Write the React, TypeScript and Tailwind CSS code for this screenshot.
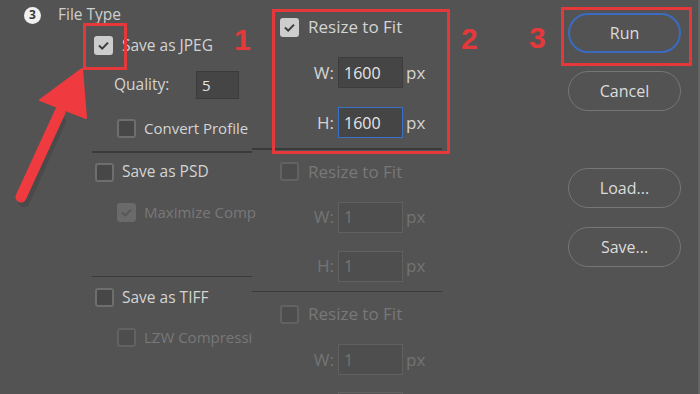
import type { ReactNode } from "react"

function Check({ checked = false, disabled = false }: { checked?: boolean; disabled?: boolean }) {
  const box = checked
    ? disabled
      ? "bg-[#6a6a6a] border-[#6a6a6a]"
      : "bg-[#cdcdcd] border-[#cdcdcd]"
    : disabled
      ? "bg-[#4d4d4d] border-[#626262]"
      : "bg-[#474747] border-[#6e6e6e]"
  return (
    <span className={`w-[19px] h-[19px] rounded-[3px] border-2 flex items-center justify-center shrink-0 ${box}`}>
      {checked && (
        <svg width="13" height="13" viewBox="0 0 13 13">
          <polyline
            points="2,6.5 5.2,9.6 11,3.6"
            fill="none"
            stroke={disabled ? "#575757" : "#3b3b3b"}
            strokeWidth="2"
          />
        </svg>
      )}
    </span>
  )
}

function Row({ children, className = "" }: { children: ReactNode; className?: string }) {
  return <div className={`flex items-center whitespace-nowrap ${className}`}>{children}</div>
}

function Field({ label, value, disabled = false, focused = false }: { label: string; value: string; disabled?: boolean; focused?: boolean }) {
  const text = disabled ? "text-[#747474]" : "text-[#d4d4d4]"
  const box = focused
    ? "border-[#3a70c8] bg-[#454545] text-[#e6e6e6]"
    : disabled
      ? "border-[#606060] bg-[#4e4e4e] text-[#747474]"
      : "border-[#3d3d3d] bg-[#454545] text-[#e6e6e6]"
  return (
    <div className="flex items-center h-[31px]">
      <span className={`w-[86px] text-right pr-[4px] text-[17px] ${text}`}>{label}</span>
      <span className={`w-[65px] h-[31px] border-[1.5px] flex items-center pl-[5px] text-[16px] ${box}`}>{value}</span>
      <span className={`ml-[3px] text-[17px] ${text}`}>px</span>
    </div>
  )
}

function Pill({ label, primary = false }: { label: string; primary?: boolean }) {
  return (
    <button
      className={`w-[113px] h-[40px] rounded-full flex items-center justify-center text-[16px] text-[#dcdcdc] ${
        primary ? "border-2 border-[#3b6bc0]" : "border-[1.5px] border-[#767676]"
      }`}
    >
      {label}
    </button>
  )
}

export default function App() {
  return (
    <div
      className="relative w-[700px] h-[394px] overflow-hidden bg-[#535353] text-[#d4d4d4] flex"
      style={{ fontFamily: '"Open Sans", "Noto Sans", sans-serif' }}
    >
      {/* left column */}
      <div className="w-[252px] shrink-0 flex flex-col pt-[6px]">
        <Row className="h-[18px] pl-[24px]">
          <span className="w-[17px] h-[17px] rounded-full bg-[#f0f0f0] text-[#3a3a3a] text-[12px] font-bold flex items-center justify-center leading-none">
            3
          </span>
          <span className="ml-[17px] text-[15.5px] text-[#cfcfcf]">File Type</span>
        </Row>
        <Row className="h-[19px] mt-[12px] pl-[94px]">
          <Check checked />
          <span className="ml-[9px] text-[15.5px]">Save as JPEG</span>
        </Row>
        <Row className="h-[28px] mt-[16px] pl-[114px]">
          <span className="w-[82px] text-[15.5px]">Quality:</span>
          <span className="w-[43px] h-[28px] border-[1.5px] border-[#3b3b3b] bg-[#454545] flex items-center pl-[5px] text-[15px] text-[#e6e6e6]">
            5
          </span>
        </Row>
        <Row className="h-[19px] mt-[20px] pl-[117px]">
          <Check />
          <span className="ml-[8px] text-[15px]">Convert Profile</span>
        </Row>
        <div className="ml-[92px] mt-[13px] h-[1.5px] bg-[#3a3a3a]" />
        <Row className="h-[19px] mt-[10px] pl-[95px]">
          <Check />
          <span className="ml-[8px] text-[15.5px]">Save as PSD</span>
        </Row>
        <Row className="h-[19px] mt-[21px] pl-[117px]">
          <Check checked disabled />
          <span className="ml-[8px] text-[15px] text-[#787878]">Maximize Comp</span>
        </Row>
        <div className="ml-[92px] mt-[54px] h-[1.5px] bg-[#3a3a3a]" />
        <Row className="h-[19px] mt-[11px] pl-[95px]">
          <Check />
          <span className="ml-[8px] text-[15.5px]">Save as TIFF</span>
        </Row>
        <Row className="h-[19px] mt-[21px] pl-[117px]">
          <Check disabled />
          <span className="ml-[8px] text-[15px] text-[#787878]">LZW Compressi</span>
        </Row>
      </div>

      {/* middle column */}
      <div className="w-[190px] shrink-0 flex flex-col pt-[17px]">
        <Row className="h-[20px] pl-[28px]">
          <Check checked />
          <span className="ml-[9px] text-[17px]">Resize to Fit</span>
        </Row>
        <div className="mt-[20px]">
          <Field label="W:" value="1600" />
        </div>
        <div className="mt-[19px]">
          <Field label="H:" value="1600" focused />
        </div>
        <div className="mt-[10px] h-[1.5px] bg-[#3a3a3a]" />
        <Row className="h-[20px] mt-[12px] pl-[28px]">
          <Check disabled />
          <span className="ml-[9px] text-[17px] text-[#787878]">Resize to Fit</span>
        </Row>
        <div className="mt-[20px]">
          <Field label="W:" value="1" disabled />
        </div>
        <div className="mt-[18px]">
          <Field label="H:" value="1" disabled />
        </div>
        <div className="mt-[9px] h-[1.5px] bg-[#3a3a3a]" />
        <Row className="h-[20px] mt-[12px] pl-[28px]">
          <Check disabled />
          <span className="ml-[9px] text-[17px] text-[#787878]">Resize to Fit</span>
        </Row>
        <div className="mt-[20px]">
          <Field label="W:" value="1" disabled />
        </div>
        <div className="mt-[17px] h-[2px] ml-[86px] w-[65px] border-t-[1.5px] border-x-[1.5px] border-[#606060]" />
      </div>

      {/* right column */}
      <div className="flex-1 flex flex-col items-start pl-[126px] pt-[13px]">
        <Pill label="Run" primary />
        <div className="mt-[18px]">
          <Pill label="Cancel" />
        </div>
        <div className="mt-[57px]">
          <Pill label="Load..." />
        </div>
        <div className="mt-[19px]">
          <Pill label="Save..." />
        </div>
      </div>
      <div className="w-[2px] shrink-0 bg-[#646464]" />

      {/* annotations */}
      <div className="absolute left-[83px] top-[23px] w-[44px] h-[47px] border-[3px] border-[#e5383b]" />
      <div className="absolute left-[272px] top-[9px] w-[178px] h-[145px] border-[3px] border-[#e5383b]" />
      <div className="absolute left-[561px] top-[7px] w-[131px] h-[59px] border-[3px] border-[#e5383b]" />
      <span
        className="absolute left-[234px] top-[22px] text-[30px] leading-[36px] font-bold text-[#e5383b]"
        style={{ fontFamily: '"Liberation Sans", Arial, sans-serif' }}
      >
        1
      </span>
      <span
        className="absolute left-[461px] top-[21px] text-[30px] leading-[36px] font-bold text-[#e5383b]"
        style={{ fontFamily: '"Liberation Sans", Arial, sans-serif' }}
      >
        2
      </span>
      <span
        className="absolute left-[529px] top-[20px] text-[30px] leading-[36px] font-bold text-[#e5383b]"
        style={{ fontFamily: '"Liberation Sans", Arial, sans-serif' }}
      >
        3
      </span>
      <svg className="absolute left-0 top-0" width="700" height="394" viewBox="0 0 700 394">
        <line x1="22" y1="198" x2="58" y2="118" stroke="#3a3a3a" strokeOpacity="0.35" strokeWidth="12" strokeLinecap="round" transform="translate(2,3)" />
        <line x1="21" y1="197" x2="60" y2="112" stroke="#ef3b3f" strokeWidth="11" strokeLinecap="round" />
        <polygon points="82,69 86,118 40,100" fill="#ef3b3f" strokeLinejoin="round" stroke="#ef3b3f" strokeWidth="2" />
      </svg>
    </div>
  )
}
